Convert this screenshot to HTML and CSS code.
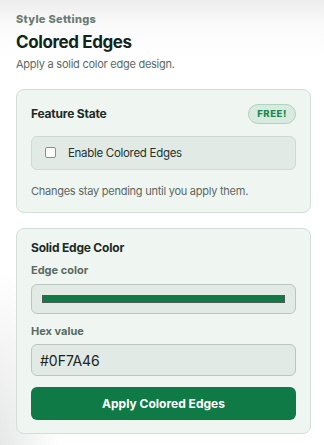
FILE: index.html
```html
<!DOCTYPE html>
<html lang="en">
<head>
    <meta charset="UTF-8">
    <meta name="viewport" content="width=device-width, initial-scale=1.0">
    <title>Colored Edges</title>
    <link rel="stylesheet" href="styles.css">
</head>
<body>
    <div class="page">
        <div class="eyebrow">Style Settings</div>
        <h1>Colored Edges</h1>
        <p class="lead">Apply a solid color edge design.</p>

        <div class="card">
            <div class="card-head">
                <h2>Feature State</h2>
                <span class="badge">FREE!</span>
            </div>
            <label class="toggle-row">
                <input type="checkbox" class="check">
                <span>Enable Colored Edges</span>
            </label>
            <p class="hint">Changes stay pending until you apply them.</p>
        </div>

        <div class="card card-color">
            <h2>Solid Edge Color</h2>
            <div class="field-label">Edge color</div>
            <div class="color-box">
                <div class="swatch"></div>
            </div>
            <label class="field-label label-hex" for="hex">Hex value</label>
            <input type="text" id="hex" class="hex-input" value="#0F7A46">
            <button class="apply">Apply Colored Edges</button>
        </div>
    </div>
</body>
</html>
```

FILE: styles.css
```css
* {
    box-sizing: border-box;
}
body {
    margin: 0;
    min-height: 445px;
    font-family: Inter, "Noto Sans", sans-serif;
    color: #15261e;
    background:
        radial-gradient(ellipse 60px 180px at 0 100%, #e6e8e7 0, rgba(255,255,255,0) 100%),
        linear-gradient(#ededed 0, #fafafa 24px, #ffffff 60px);
}
.page {
    padding: 12px 13px 12px 16px;
}
.eyebrow {
    font-size: 11px;
    line-height: 15px;
    font-weight: 800;
    letter-spacing: 0.3px;
    color: #6b7b72;
}
h1 {
    margin: 3.5px 0 0;
    font-size: 17px;
    line-height: 22px;
    font-weight: 700;
    letter-spacing: -0.4px;
    color: #13241c;
}
.lead {
    margin: 4.5px 0 0;
    font-size: 11px;
    line-height: 15px;
    letter-spacing: -0.25px;
    color: #5c6862;
}
.card {
    margin-top: 16.5px;
    background-color: #eff5f1;
    border: 1px solid #d4ddd8;
    border-radius: 8px;
    padding: 14px 14px 13px;
}
.card-head {
    display: flex;
    justify-content: space-between;
    align-items: center;
    height: 20px;
}
h2 {
    margin: 0;
    font-size: 12px;
    line-height: 16px;
    font-weight: 700;
    letter-spacing: -0.2px;
    color: #1d2b24;
}
.badge {
    display: inline-flex;
    align-items: center;
    height: 20px;
    padding: 0 8px;
    border-radius: 10px;
    background-color: #d9ebe0;
    border: 1px solid #aed4bc;
    color: #1a8a4f;
    font-size: 9.5px;
    font-weight: 800;
    letter-spacing: 0.6px;
}
.toggle-row {
    display: flex;
    align-items: center;
    gap: 12px;
    margin-top: 12px;
    height: 34px;
    padding: 0 13px;
    background-color: #e2eae5;
    border: 1px solid #d0dad4;
    border-radius: 6px;
    font-size: 11.5px;
    letter-spacing: -0.3px;
    color: #25332c;
}
.check {
    appearance: none;
    margin: 0;
    width: 11px;
    height: 11px;
    background: #fff;
    border: 1px solid #88928c;
    border-radius: 2px;
}
.hint {
    margin: 13px 0 0;
    font-size: 11px;
    line-height: 16px;
    letter-spacing: -0.25px;
    color: #5c6862;
}
.card-color {
    margin-top: 15px;
    padding-top: 11px;
}
.field-label {
    display: block;
    margin-top: 7.5px;
    font-size: 11px;
    line-height: 15px;
    font-weight: 700;
    color: #5b6a62;
}
.color-box {
    margin-top: 6px;
    height: 30px;
    padding: 0 10px;
    display: flex;
    align-items: center;
    background-color: #e2eae5;
    border: 1px solid #bcc6c0;
    border-radius: 6px;
}
.swatch {
    flex: 1;
    height: 8px;
    background-color: #0f7a46;
    border: 1px solid #4e5a53;
}
.label-hex {
    margin-top: 10px;
}
.hex-input {
    display: block;
    width: 100%;
    margin-top: 5px;
    height: 32px;
    padding: 0 8px;
    font-family: Inter, "Noto Sans", sans-serif;
    font-size: 14px;
    color: #1b2620;
    background-color: #e2eae5;
    border: 1px solid #bcc6c0;
    border-radius: 6px;
}
.apply {
    display: block;
    width: 100%;
    margin-top: 11px;
    height: 33px;
    border: none;
    border-radius: 6px;
    background-color: #0f7a46;
    color: #fff;
    font-family: Inter, "Noto Sans", sans-serif;
    font-size: 12px;
    font-weight: 700;
    cursor: pointer;
}
```
